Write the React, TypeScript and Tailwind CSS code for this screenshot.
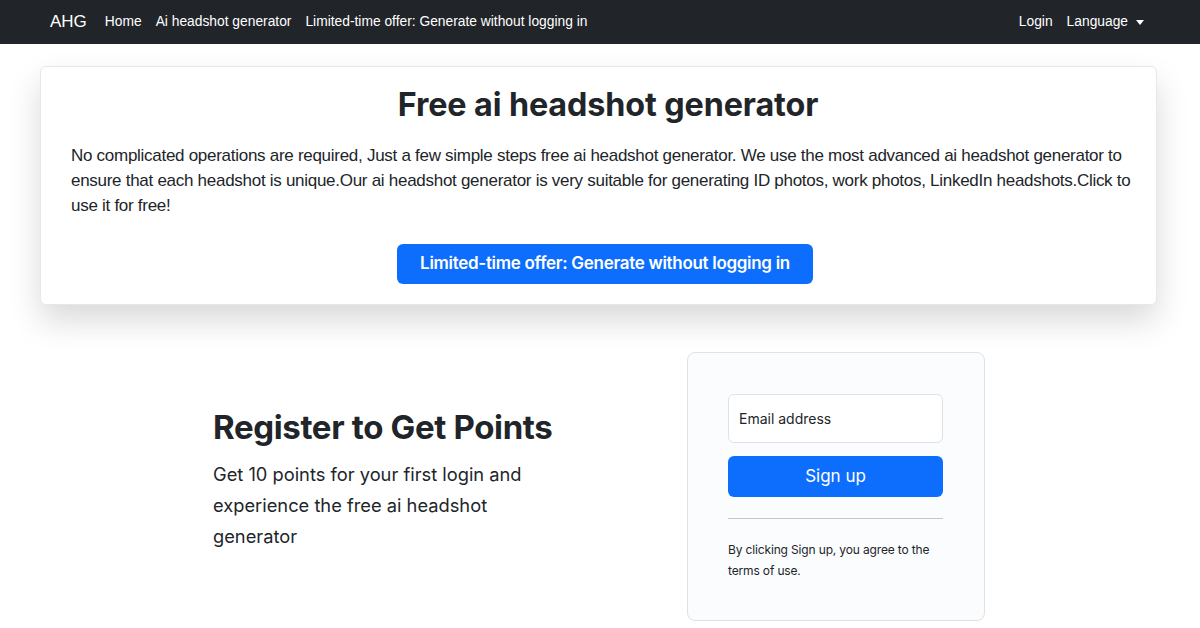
import React from "react";

export default function App() {
  return (
    <div className="min-h-[628px] w-[1200px] bg-white text-[#212529]" style={{ fontFamily: "Inter, 'Noto Sans', sans-serif" }}>
      <nav className="flex h-[44px] items-center bg-[#212529] px-[50px] text-white" style={{ fontFamily: "'Liberation Sans', Arial, sans-serif" }}>
        <span className="mr-[18px] text-[17px]">AHG</span>
        <div className="flex items-center gap-[14px] text-[13.8px]">
          <span>Home</span>
          <span>Ai headshot generator</span>
          <span>Limited-time offer: Generate without logging in</span>
        </div>
        <div className="ml-auto mr-[6px] flex items-center gap-[14px] text-[13.8px]">
          <span>Login</span>
          <span className="flex items-center">
            Language
            <span className="ml-[8px] inline-block h-0 w-0 border-x-[4px] border-t-[5px] border-x-transparent border-t-white"></span>
          </span>
        </div>
      </nav>

      <div className="px-[40px] pt-[22px]">
        <div className="w-[1117px] rounded-[6px] border border-[#e5e7eb] bg-white pb-[20px] pl-[30px] pr-[17px] pt-[18px] shadow-[0_16px_32px_rgba(0,0,0,0.15)]">
          <h1 className="pl-[6px] text-center text-[32.3px] font-bold leading-[40px] tracking-[-0.1px]">Free ai headshot generator</h1>
          <p className="mt-[18px] text-[17px] leading-[25px] tracking-[-0.28px] text-[#212529]" style={{ fontFamily: "'Liberation Sans', Arial, sans-serif" }}>
            No complicated operations are required, Just a few simple steps free ai headshot generator. We use the most advanced ai headshot generator to ensure that each headshot is unique.Our ai headshot generator is very suitable for generating ID photos, work photos, LinkedIn headshots.Click to use it for free!
          </p>
          <div className="mt-[26px] flex justify-center">
            <button className="h-[40px] w-[416px] rounded-[6px] bg-[#0d6efd] text-[17px] font-semibold tracking-[-0.3px] text-white">
              Limited-time offer: Generate without logging in
            </button>
          </div>
        </div>
      </div>

      <div className="mt-[47px] flex items-center pl-[213px]">
        <div className="w-[474px] pb-[16px]">
          <h2 className="pt-[1px] text-[33px] font-bold leading-[40px] tracking-[-0.35px]">Register to Get Points</h2>
          <p className="mt-[12px] w-[330px] text-[18.3px] leading-[31px]">
            Get 10 points for your first login and experience the free ai headshot generator
          </p>
        </div>
        <div className="h-[269px] w-[298px] rounded-[8px] border border-[#dee2e6] bg-[#fbfcfd] pl-[40px] pr-[41px] pt-[41px]">
          <div className="flex h-[49px] items-center rounded-[6px] border border-[#dee2e6] bg-white px-[10px] text-[14px]">Email address</div>
          <button className="mt-[13px] h-[41px] w-full rounded-[6px] bg-[#0d6efd] text-[17px] text-white">Sign up</button>
          <hr className="mt-[21px] border-t border-[#c4c8cc]" />
          <p className="mt-[20px] text-[12px] leading-[21px] tracking-[-0.15px] text-[#212529]">By clicking Sign up, you agree to the terms of use.</p>
        </div>
      </div>
    </div>
  );
}
